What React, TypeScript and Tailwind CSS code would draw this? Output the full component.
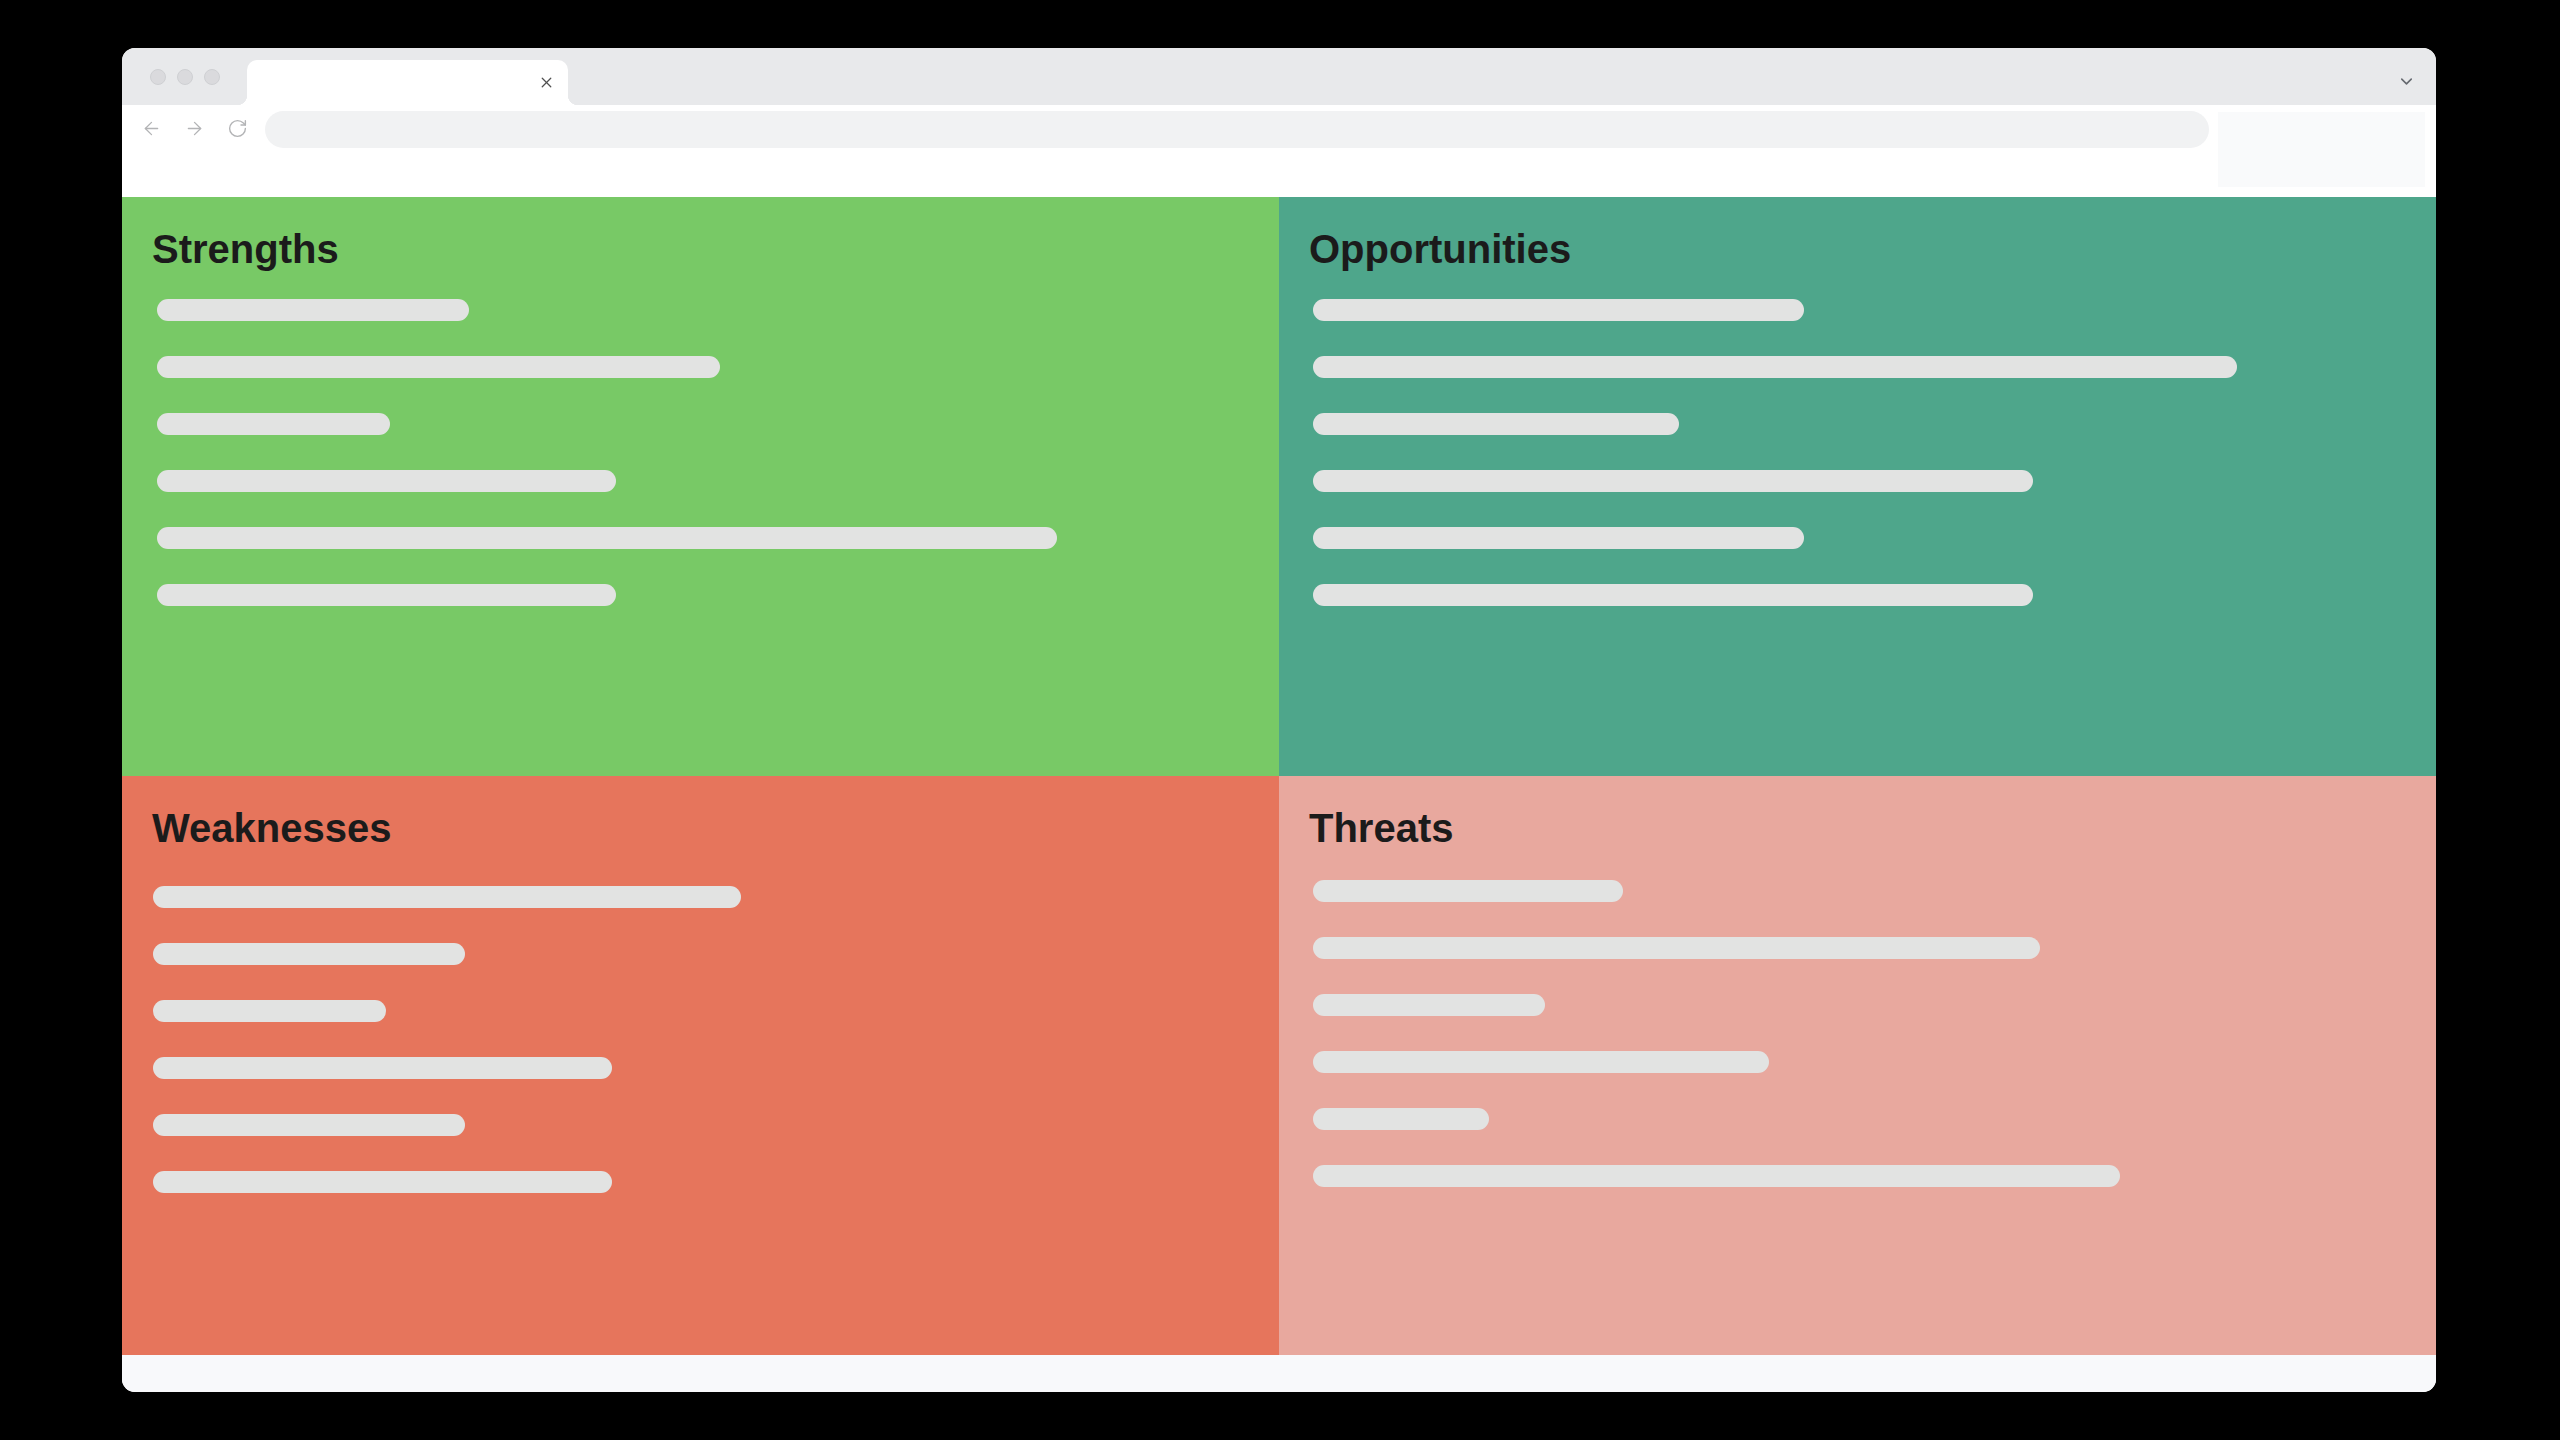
import React from "react";
import { ArrowLeft, ArrowRight, RotateCw, X, ChevronDown } from "lucide-react";

type Quad = {
  title: string;
  bg: string;
  bars: number[];
  barPad: string;
  barTop: string;
};

const quads: Quad[] = [
  { title: "Strengths", bg: "bg-[#78c966]", bars: [312, 563, 233, 459, 900, 459], barPad: "pl-[35px]", barTop: "mt-[30px]" },
  { title: "Opportunities", bg: "bg-[#4ea68b]", bars: [491, 924, 366, 720, 491, 720], barPad: "pl-[34px]", barTop: "mt-[30px]" },
  { title: "Weaknesses", bg: "bg-[#e6755c]", bars: [588, 312, 233, 459, 312, 459], barPad: "pl-[31px]", barTop: "mt-[38px]" },
  { title: "Threats", bg: "bg-[#e8a89e]", bars: [310, 727, 232, 456, 176, 807], barPad: "pl-[34px]", barTop: "mt-[32px]" },
];

function Quadrant({ q }: { q: Quad }) {
  return (
    <div className={`${q.bg} flex flex-col pt-[32px]`}>
      <h2 className="pl-[30px] text-[40px] leading-[40px] font-bold text-[#1b1b1b] [font-family:'Liberation_Sans',Arial,sans-serif]">
        {q.title}
      </h2>
      <div className={`${q.barTop} ${q.barPad} flex flex-col gap-[35px]`}>
        {q.bars.map((w, i) => (
          <div key={i} className="h-[22px] rounded-full bg-[#e2e3e2]" style={{ width: w }} />
        ))}
      </div>
    </div>
  );
}

export default function App() {
  return (
    <div className="w-[2560px] h-[1440px] bg-black pt-[48px] pl-[122px] [font-family:'Liberation_Sans',Arial,sans-serif]">
      <div className="w-[2314px] h-[1344px] rounded-[13px] overflow-hidden flex flex-col bg-white">
        {/* Tab strip */}
        <div className="h-[57px] bg-[#e8e9eb] flex items-end relative">
          <div className="flex gap-[11px] pl-[28px] self-start mt-[21px]">
            <div className="w-[16px] h-[16px] rounded-full bg-[#dadadd] border border-[#cfd0d3]" />
            <div className="w-[16px] h-[16px] rounded-full bg-[#dadadd] border border-[#cfd0d3]" />
            <div className="w-[16px] h-[16px] rounded-full bg-[#dadadd] border border-[#cfd0d3]" />
          </div>
          <div className="relative ml-[27px] w-[321px] h-[45px] bg-white rounded-t-[10px] flex items-center justify-end pr-[13px]">
            <div className="absolute left-[-10px] bottom-0 w-[10px] h-[10px] bg-[radial-gradient(circle_at_0_0,transparent_10px,white_10.5px)]" />
            <div className="absolute right-[-10px] bottom-0 w-[10px] h-[10px] bg-[radial-gradient(circle_at_100%_0,transparent_10px,white_10.5px)]" />
            <X size={17} strokeWidth={1.8} className="text-[#505050] mb-[1px]" />
          </div>
          <div className="flex-1" />
          <div className="self-start mt-[24px] mr-[20px]">
            <ChevronDown size={19} strokeWidth={2} className="text-[#666a70]" />
          </div>
        </div>

        {/* Toolbar */}
        <div className="h-[92px] bg-white flex items-start">
          <div className="flex items-center gap-[22px] pl-[19px] mt-[13px] text-[#b3b4b6]">
            <ArrowLeft size={21} strokeWidth={1.5} />
            <ArrowRight size={21} strokeWidth={1.5} />
            <RotateCw size={21} strokeWidth={1.6} />
          </div>
          <div className="ml-[17px] mt-[6px] w-[1944px] h-[37px] rounded-full bg-[#f1f2f3]" />
          <div className="ml-[9px] mt-[7px] w-[207px] h-[75px] bg-[#f9fafb]" />
        </div>

        {/* SWOT grid */}
        <div className="h-[1158px] grid grid-cols-2 grid-rows-2">
          {quads.map((q) => (
            <Quadrant key={q.title} q={q} />
          ))}
        </div>

        {/* Footer */}
        <div className="h-[37px] bg-[#f8f9fb]" />
      </div>
    </div>
  );
}
